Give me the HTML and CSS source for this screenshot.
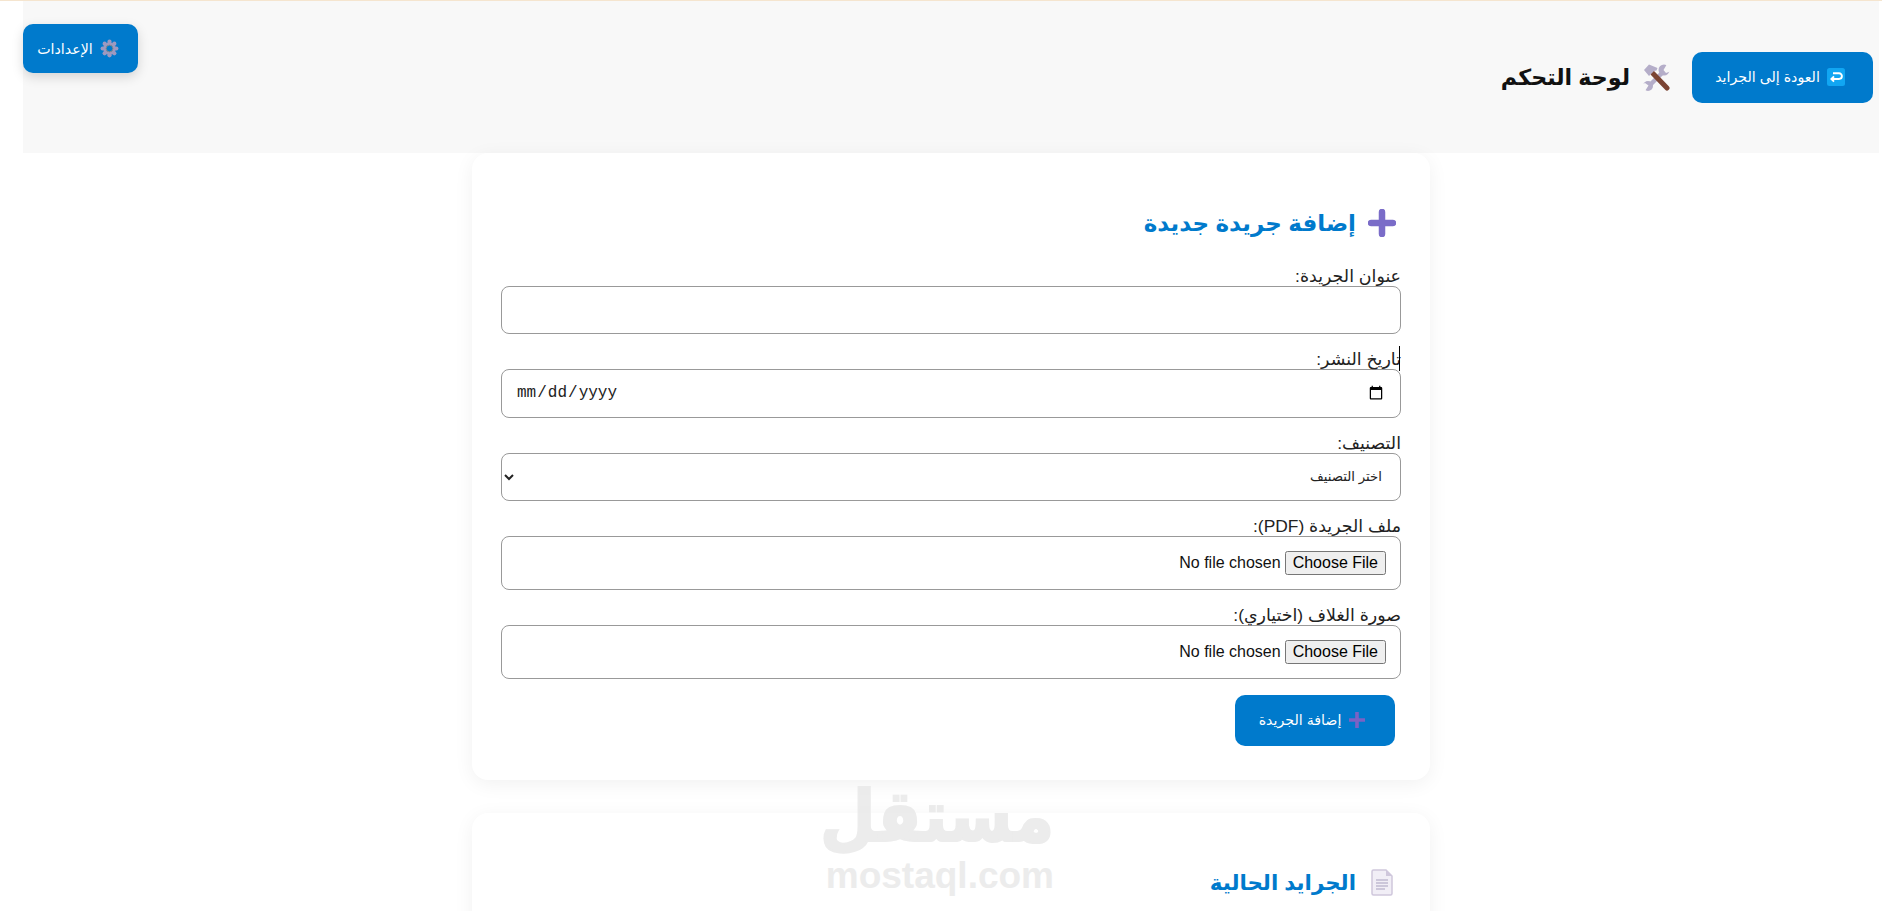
FILE: index.html
```html
<!DOCTYPE html>
<html lang="ar" dir="rtl">
<head>
<meta charset="utf-8">
<title>لوحة التحكم</title>
<link rel="stylesheet" href="styles.css">
</head>
<body>
<button class="btn btn-settings" type="button">
  <svg class="ico-16" viewBox="0 0 20 20"><g fill="#9d99c0"><circle cx="10" cy="2.800" r="2.200"/><circle cx="10" cy="17.200" r="2.200"/><circle cx="2.800" cy="10" r="2.200"/><circle cx="17.200" cy="10" r="2.200"/><circle cx="4.900" cy="4.900" r="2.200"/><circle cx="15.100" cy="4.900" r="2.200"/><circle cx="4.900" cy="15.100" r="2.200"/><circle cx="15.100" cy="15.100" r="2.200"/></g><circle cx="10" cy="10" r="5.200" fill="none" stroke="#9d99c0" stroke-width="3"/><circle cx="10" cy="10" r="3.600" fill="none" stroke="#8b8b8b" stroke-width="1"/></svg>
  <span>الإعدادات</span>
</button>
<header class="topbar">
  <button class="btn btn-back" type="button">
    <svg class="ico-18" viewBox="0 0 18 18"><rect width="18" height="18" rx="2.500" fill="#11a6f2"/><path d="M6 5.200h6a2.900 2.900 0 0 1 0 5.800H4.600M7 8.400 4.400 11 7 13.600" fill="none" stroke="#fff" stroke-width="1.900"/></svg>
    <span>العودة إلى الجرايد</span>
  </button>
  <h1 class="page-title">
    <svg class="ico-28" viewBox="0 0 28 28"><path d="M5.500 24.500 22 8" stroke="#b5aec9" stroke-width="4.500"/><circle cx="22" cy="7" r="5.500" fill="#b5aec9"/><circle cx="6" cy="23" r="5" fill="#b5aec9"/><path d="M21.500 7 25 1h4v7l-5 2ZM6.500 22.500 3 28h-4v-6l4-2Z" fill="#f8f8f8"/><path d="M11 10.500 25 25" stroke="#7b4433" stroke-width="5" stroke-linecap="round"/><path d="M2 7 7 1.500l8.500 3.500-1 2.500-2.500.500-5 5Z" fill="#b5aec9"/></svg>
    <span>لوحة التحكم</span>
  </h1>
</header>
<main class="content">
  <section class="card">
    <h2 class="card-title">
      <svg class="ico-title" viewBox="0 0 28 28"><path d="M14 3v22M3 14h22" stroke="#7a6cc8" stroke-width="6.500" stroke-linecap="round"/></svg>
      <span>إضافة جريدة جديدة</span>
    </h2>
    <form class="form">
      <div class="field">
        <label class="field-label">عنوان الجريدة:</label>
        <input class="control control-text" type="text">
      </div>
      <div class="field">
        <label class="field-label">تاريخ النشر:</label>
        <i class="ibeam"></i>
        <input class="control control-date" type="date" dir="ltr">
      </div>
      <div class="field">
        <label class="field-label">التصنيف:</label>
        <select class="control control-select"><option>اختر التصنيف</option></select>
      </div>
      <div class="field">
        <label class="field-label">ملف الجريدة (PDF):</label>
        <input class="control control-file" type="file">
      </div>
      <div class="field">
        <label class="field-label">صورة الغلاف (اختياري):</label>
        <input class="control control-file" type="file">
      </div>
      <button class="btn btn-submit" type="button">
        <svg class="ico-18" viewBox="0 0 18 18"><path d="M9 1v16M1 9h16" stroke="#7a62c4" stroke-width="3.600"/></svg>
        <span>إضافة الجريدة</span>
      </button>
    </form>
  </section>
  <section class="card card-list">
    <h2 class="card-title card-title-list">
      <svg class="ico-doc" viewBox="-3 0 28 27"><path d="M1 2.500A1.500 1.500 0 0 1 2.500 1H15l6 6v17.500a1.500 1.500 0 0 1-1.500 1.500h-17A1.500 1.500 0 0 1 1 24.500Z" fill="#f1eef6" stroke="#cfc7dc" stroke-width="1.500"/><path d="M15 1v6h6Z" fill="#cfc7dc"/><path d="M5 11h12M5 14h12M5 17h12M5 20h9" stroke="#a79fbd" stroke-width="1.200"/></svg>
      <span>الجرايد الحالية</span>
    </h2>
  </section>
</main>
<div class="watermark" aria-hidden="true">
  <div class="wm-ar">مستقل</div>
  <div class="wm-en">mostaql.com</div>
</div>
</body>
</html>
```
FILE: styles.css
```css
* { box-sizing: border-box; }
html, body { height: 911px; overflow: hidden; }
body {
  margin: 0;
  padding: 0 3px 0 23px;
  background: #fff;
  border-top: 1px solid #f5e5cf;
  position: relative;
  font-family: "Liberation Sans", "DejaVu Sans", sans-serif;
  color: #222;
}
.btn {
  display: inline-flex;
  align-items: center;
  justify-content: center;
  gap: 7px;
  padding: 0 5px 0 0;
  border: 0;
  border-radius: 10px;
  background: #007acc;
  color: #fff;
  font-family: inherit;
  font-size: 14.2px;
}
.btn-settings {
  position: absolute;
  left: 23px;
  top: 23px;
  width: 115px;
  height: 49px;
  box-shadow: 0 4px 12px rgba(0, 0, 0, .15);
}
.ico-16 { width: 19px; height: 19px; flex: none; }
.ico-18 { width: 18px; height: 18px; flex: none; }
.ico-28 { width: 28px; height: 28px; flex: none; }
.ico-title { width: 28px; height: 28px; flex: none; }
.ico-doc { width: 28px; height: 27px; flex: none; }
.topbar {
  height: 152px;
  background: #f8f8f8;
  display: flex;
  align-items: center;
  gap: 22px;
  padding-right: 6px;
}
.btn-back { width: 181px; height: 51px; }
.page-title {
  display: flex;
  align-items: center;
  gap: 12px;
  margin: 0;
  font-size: 22.2px;
  font-weight: 700;
  color: #111;
}
.content {
  display: flex;
  flex-direction: column;
  align-items: center;
  gap: 33px;
}
.card {
  width: 957.6px;
  background: #fff;
  border-radius: 16px;
  padding: 50px 28.8px 34px;
  box-shadow: 0 4px 20px rgba(0, 0, 0, .06);
}
.card-list { min-height: 300px; }
.card-title {
  display: flex;
  align-items: center;
  gap: 12px;
  height: 40px;
  margin: 0 5px 0 0;
  font-size: 23px;
  font-weight: 700;
  color: #007acc;
}
.card-title-list { font-size: 21.4px; }
.form { display: flex; flex-direction: column; gap: 15px; margin-top: 23px; }
.field { position: relative; }
.field-label {
  display: block;
  height: 20px;
  line-height: 20px;
  font-size: 17.4px;
  color: #222;
}
.ibeam {
  position: absolute;
  top: -3px;
  right: 1px;
  width: 1px;
  height: 25px;
  background: #000;
}
.control {
  display: block;
  width: 100%;
  border: 1px solid #999;
  border-radius: 8px;
  background: #fff;
  color: #222;
}
.control-text { height: 47.6px; }
.control-date {
  height: 49px;
  padding: 0 14px;
  font-family: "Liberation Mono", monospace;
  font-size: 16px;
}
.control-select {
  height: 48px;
  padding: 0 14px 0 0;
  font-family: "Liberation Sans", "DejaVu Sans", sans-serif;
  font-size: 13.3px;
}
.control-file {
  height: 54px;
  padding: 14px;
  font-family: "Liberation Sans", sans-serif;
  font-size: 16px;
  color: #111;
}
.btn-submit {
  align-self: flex-start;
  width: 160px;
  height: 51px;
  margin: 1px 6px 0 0;
}
.watermark {
  position: absolute;
  left: 828px;
  top: 782px;
  width: 226px;
  text-align: center;
  color: #e9e9e9;
  opacity: .85;
  pointer-events: none;
}
.wm-ar {
  font-family: "DejaVu Sans", sans-serif;
  font-weight: 700;
  font-size: 64px;
  line-height: 76px;
  white-space: nowrap;
  -webkit-text-stroke: 2px #e9e9e9;
  transform: scaleY(1.12);
  transform-origin: center bottom;
}
.wm-en {
  font-family: "Liberation Sans", sans-serif;
  font-weight: 700;
  font-size: 37px;
  line-height: 34px;
  white-space: nowrap;
}
```
